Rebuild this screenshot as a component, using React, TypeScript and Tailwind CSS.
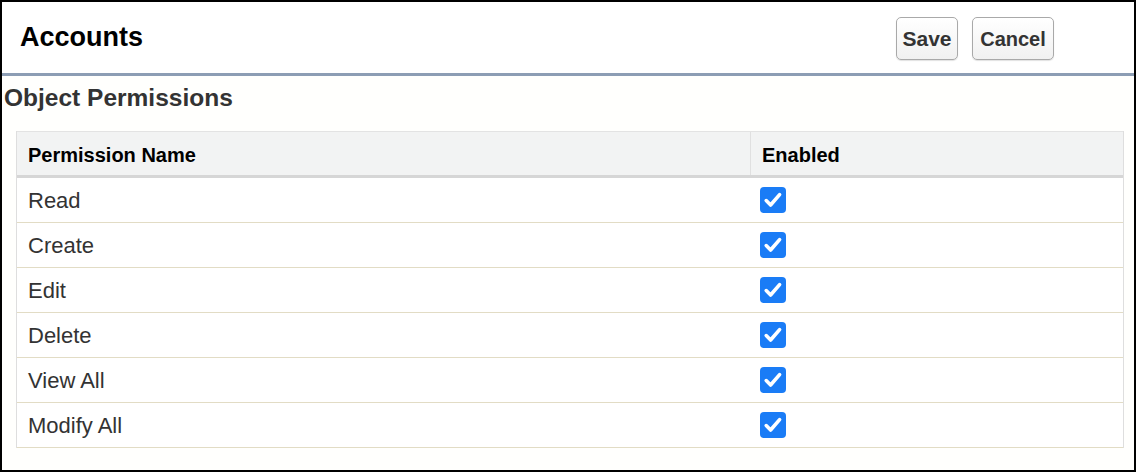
import React from "react";

const rows = ["Read", "Create", "Edit", "Delete", "View All", "Modify All"];

function Check() {
  return (
    <span className="flex h-[26px] w-[26px] items-center justify-center rounded-[4px] bg-[#1a7cf6]">
      <svg width="26" height="26" viewBox="0 0 26 26" fill="none">
        <path d="M6.2 13.6 L10.6 18 L19.6 7.6" stroke="white" strokeWidth="3.6" strokeLinecap="round" strokeLinejoin="round" />
      </svg>
    </span>
  );
}

export default function App() {
  return (
    <div
      className="flex h-[472px] w-[1136px] flex-col border-2 border-black bg-white text-[#333]"
      style={{ fontFamily: '"Liberation Sans", Arial, sans-serif' }}
    >
      <div className="flex h-[71px] shrink-0 items-center justify-between pl-[18px] pr-[80px]">
        <h1 className="text-[27px] font-bold leading-none text-black">Accounts</h1>
        <div className="flex gap-[14px] pt-[2px]">
          <button className="h-[43px] w-[62px] rounded-[5px] border border-[#a9a9a9] bg-gradient-to-b from-white to-[#f1f1f1] text-[21px] font-bold text-[#333] shadow-[0_1px_1px_rgba(0,0,0,0.12)]">
            Save
          </button>
          <button className="h-[43px] w-[82px] rounded-[5px] border border-[#a9a9a9] bg-gradient-to-b from-white to-[#f1f1f1] text-[20px] font-bold text-[#333] shadow-[0_1px_1px_rgba(0,0,0,0.12)]">
            Cancel
          </button>
        </div>
      </div>
      <div className="h-[3px] shrink-0 bg-[#8c9db4]" />
      <div className="flex-1 bg-[#fffffd]">
        <h2 className="mt-[8px] pl-[2px] text-[24.5px] font-bold leading-[28px] text-[#333]">Object Permissions</h2>
        <div className="ml-[14px] mr-[10px] mt-[19px] border-x border-[#dedede]">
          <div className="grid h-[47px] grid-cols-[734px_1fr] border-t border-b-[3px] border-t-[#e3e3e3] border-b-[#d6d6d6] bg-[#f2f3f3] text-[20px] font-bold text-black">
            <div className="flex items-center border-r border-[#e0e0e0] pl-[11px] pt-[2px]">Permission Name</div>
            <div className="flex items-center pl-[11px] pt-[2px]">Enabled</div>
          </div>
          {rows.map((r) => (
            <div
              key={r}
              className="grid h-[45px] grid-cols-[734px_1fr] border-b border-[#e2dcc5] bg-white text-[22px] text-[#333]"
            >
              <div className="flex items-center pl-[11px]">{r}</div>
              <div className="flex items-center pl-[9px]">
                <Check />
              </div>
            </div>
          ))}
        </div>
      </div>
    </div>
  );
}
